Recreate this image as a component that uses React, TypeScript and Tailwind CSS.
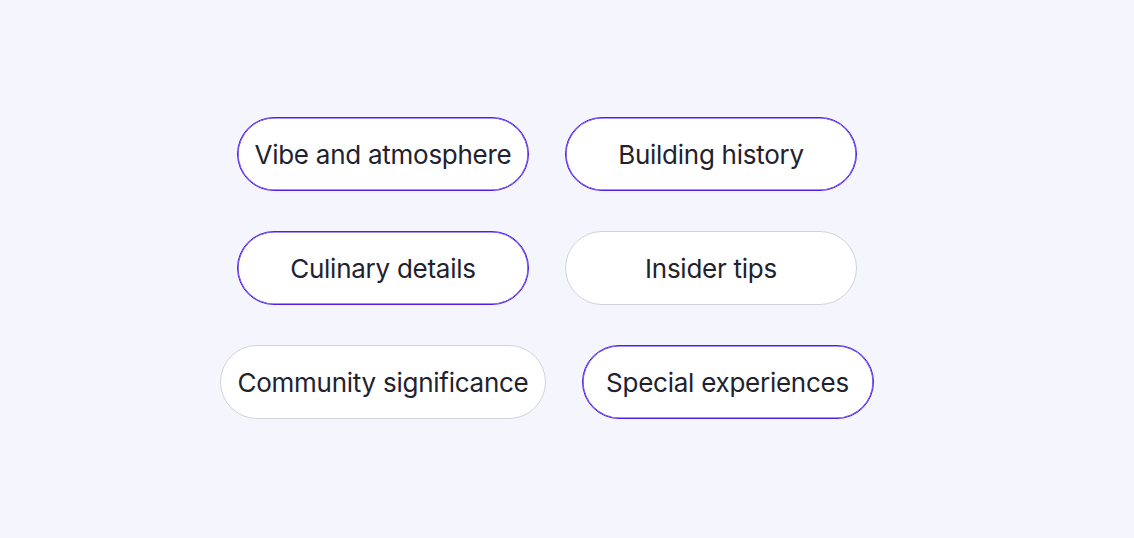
const rows = [
  [
    { label: 'Vibe and atmosphere', selected: true },
    { label: 'Building history', selected: true },
  ],
  [
    { label: 'Culinary details', selected: true },
    { label: 'Insider tips', selected: false },
  ],
  [
    { label: 'Community significance', selected: false },
    { label: 'Special experiences', selected: true },
  ],
];

function Chip({ label, selected }: { label: string; selected: boolean }) {
  return (
    <button
      className={`flex h-[74px] min-w-[292px] items-center justify-center rounded-full border bg-white px-4 text-[26px] tracking-[-0.01em] text-[#22222f] ${
        selected ? 'border-[#4f1ee8] shadow-[inset_0_0_0_0.6px_#4f1ee8]' : 'border-[#d2d2da]'
      }`}
    >
      {label}
    </button>
  );
}

export default function App() {
  return (
    <div
      className="flex h-screen w-full flex-col items-center justify-center gap-10 bg-[#f5f5fd] pr-10 pb-0.5"
      style={{ fontFamily: 'Inter, "Noto Sans", sans-serif' }}
    >
      {rows.map((row, i) => (
        <div key={i} className="flex gap-9">
          {row.map((chip) => (
            <Chip key={chip.label} {...chip} />
          ))}
        </div>
      ))}
    </div>
  );
}
